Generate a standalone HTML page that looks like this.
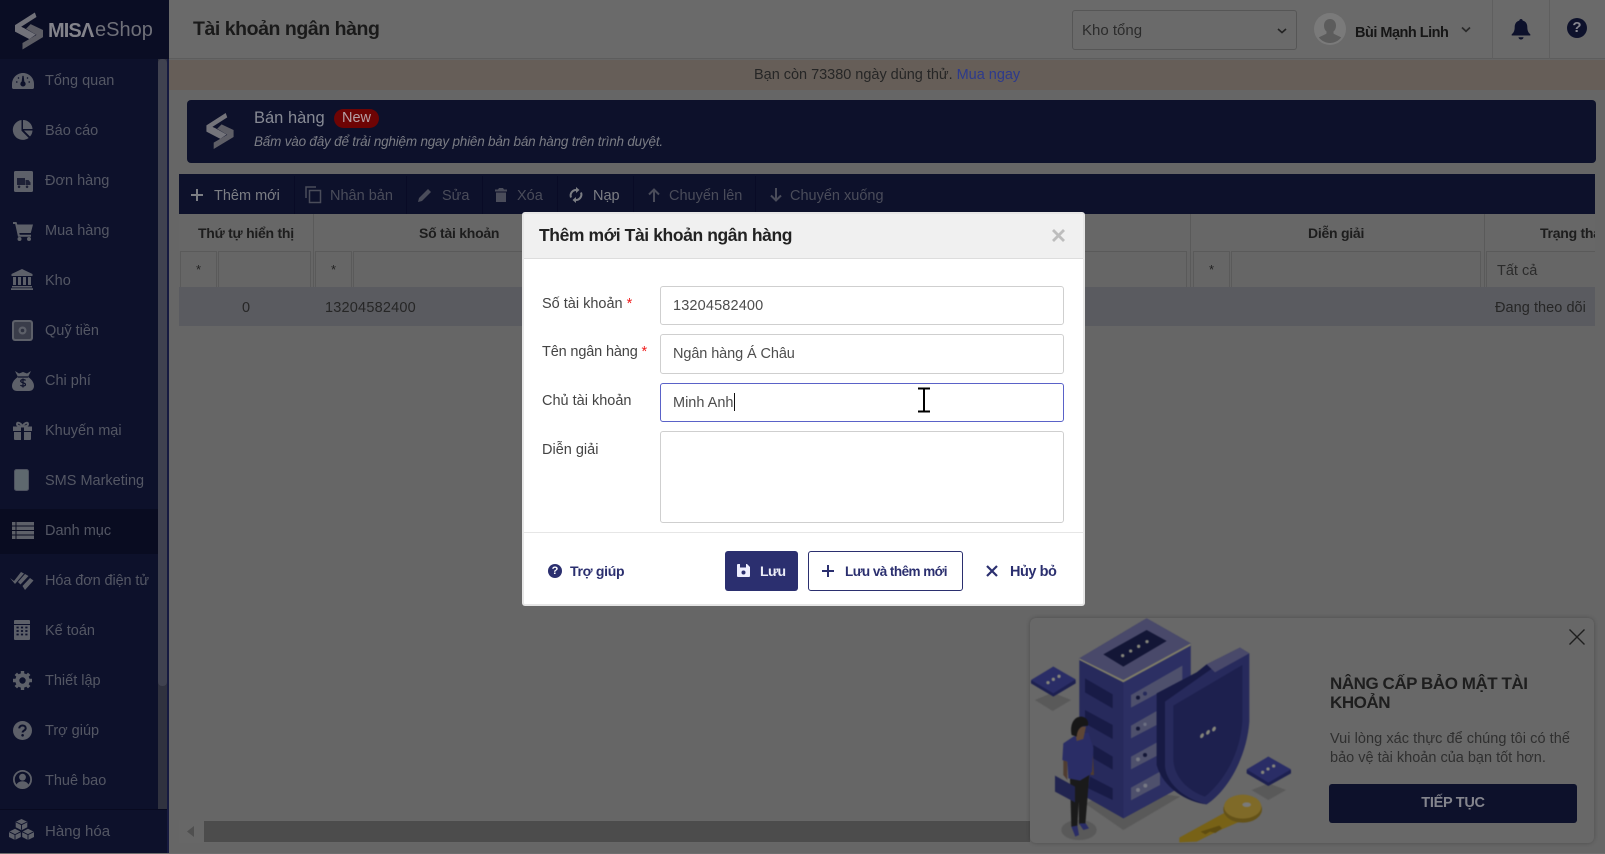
<!DOCTYPE html>
<html lang="vi"><head><meta charset="utf-8"><title>Tài khoản ngân hàng</title>
<style>
*{box-sizing:border-box}
html,body{margin:0;padding:0;width:1605px;height:854px;overflow:hidden;background:#666;font-family:"Liberation Sans","Noto Sans CJK SC",sans-serif;font-size:14.5px}
.a{position:absolute}
.t{position:absolute;white-space:nowrap;line-height:20px;transform:translateY(1px)}
svg{position:absolute;overflow:visible}
.m{color:#545764;font-size:14.5px;left:45px}
.i{fill:#5d6069}
.tb{color:#4a4c5a;font-size:14.5px}
.d{position:absolute;top:176px;height:38px;width:1px;background:#090b26}
.th{color:#1d1d1d;font-weight:bold;font-size:14px;letter-spacing:-.25px}
.f{position:absolute;top:251px;height:36px;border:1px solid #5a5a5a;border-bottom:0;color:#222;text-align:center;line-height:36px;font-size:13px}
.inp{position:absolute;left:660px;width:404px;background:#fff;border:1px solid #cfcfcf;border-radius:3px;color:#4d4d4d;font-size:14.5px;padding-left:12px;padding-top:1px;line-height:37px}
.lb{left:542px;color:#444;font-size:14.5px}
.btn{color:#2b2f6f;font-weight:bold;font-size:14px}
</style></head><body>

<!-- main -->
<div class="a" style="left:169px;top:0;width:1436px;height:59px;background:#6a6a6a;border-bottom:1px solid #5d5d5d"></div>
<div class="a" style="left:169px;top:60px;width:1436px;height:30px;background:#665e58"></div>
<div class="t" style="left:754px;top:64px;color:#262626;font-size:14.5px;letter-spacing:-.02px">Bạn còn 73380 ngày dùng thử. <span style="color:#2d3a8c">Mua ngay</span></div>
<div class="t" style="left:193px;top:17px;color:#1a1a1a;font-size:19.5px;font-weight:bold;line-height:22px;letter-spacing:-.45px">Tài khoản ngân hàng</div>

<!-- header right -->
<div class="a" style="left:1072px;top:10px;width:225px;height:40px;border:1px solid #565656;border-radius:3px"></div>
<div class="t" style="left:1082px;top:20px;color:#2b2b2b;font-size:15px">Kho tổng</div>
<svg style="left:1276px;top:27px" width="12" height="8" viewBox="0 0 12 8"><path d="M2 2l4 3.6L10 2" fill="none" stroke="#222" stroke-width="1.6"/></svg>
<svg style="left:1314px;top:13px" width="32" height="32" viewBox="0 0 32 32"><circle cx="16" cy="16" r="16" fill="#7a7a7a"/><path d="M16 6c3.600 0 6 2.800 6 6.600 0 2.600-1 4.600-2.600 6l.2 2.200 7.600 3.600c-2.800 3.600-6.800 5.600-11.200 5.600S7.600 28 4.800 24.400l7.600-3.600.2-2.200C11 17.200 10 15.200 10 12.600 10 8.800 12.400 6 16 6z" fill="#5c5c5c"/></svg>
<div class="t" style="left:1355px;top:22px;color:#161616;font-size:14.5px;font-weight:bold;letter-spacing:-.5px">Bùi Mạnh Linh</div>
<svg style="left:1460px;top:26px" width="12" height="8" viewBox="0 0 12 8"><path d="M2 1.500l4 3.800 4-3.800" fill="none" stroke="#2a2a2a" stroke-width="1.700"/></svg>
<div class="a" style="left:1492px;top:0;width:1px;height:59px;background:#5f5f5f"></div>
<div class="a" style="left:1549px;top:0;width:1px;height:59px;background:#5f5f5f"></div>
<svg style="left:1511px;top:18px" width="20" height="22" viewBox="0 0 20 22"><path d="M10 1c1 0 1.700.7 1.700 1.600 3 .7 4.600 3.300 4.600 6.400 0 3.600 1 5.600 3 7.300v1.200H.7v-1.200c2-1.700 3-3.700 3-7.300 0-3.100 1.600-5.700 4.600-6.400C8.300 1.700 9 1 10 1zM7.500 19.200h5c0 1.300-1.100 2.300-2.500 2.300s-2.500-1-2.500-2.300z" fill="#0d112b"/></svg>
<div class="a" style="left:1567px;top:18px;width:20px;height:20px;border-radius:50%;background:#0d112b;color:#87878f;font-weight:bold;font-size:15px;line-height:20px;text-align:center">?</div>

<!-- banner -->
<div class="a" style="left:187px;top:100px;width:1409px;height:63px;background:#0d112b;border-radius:4px"></div>
<svg style="left:206px;top:113px" width="28" height="36" viewBox="44 36 86 114"><path d="M105 36L44 75V95L88 118 108 104 72 84 63 80 110 50Z" fill="#74747b"/><path d="M92 72L130 90V112L67 150V130L110 105 78 86Z" fill="#5e5e66"/></svg>
<div class="t" style="left:254px;top:107px;color:#878a94;font-size:16.5px">Bán hàng</div>
<div class="a" style="left:334px;top:109px;width:45px;height:19px;background:#6e0404;border-radius:10px;color:#b5a0a5;text-align:center;line-height:19px;font-size:14.5px">New</div>
<div class="t" style="left:254px;top:131px;color:#7a7c84;font-size:13.5px;font-style:italic;letter-spacing:-.2px">Bấm vào đây để trải nghiệm ngay phiên bản bán hàng trên trình duyệt.</div>

<!-- toolbar -->
<div class="a" style="left:179px;top:174px;width:1416px;height:40px;background:#0d112b"></div>
<div class="d" style="left:294px"></div><div class="d" style="left:406px"></div><div class="d" style="left:482px"></div><div class="d" style="left:557px"></div><div class="d" style="left:633px"></div><div class="d" style="left:755px"></div>
<svg style="left:191px;top:189px" width="12" height="12" viewBox="0 0 12 12"><path d="M6 0v12M0 6h12" stroke="#7c7e84" stroke-width="2"/></svg>
<div class="t" style="left:214px;top:185px;color:#7c7e84;font-size:14.5px">Thêm mới</div>
<svg style="left:305px;top:186px" width="17" height="17" viewBox="0 0 17 17"><path d="M1 12V1h10" fill="none" stroke="#4a4c5a" stroke-width="1.500"/><rect x="4.500" y="4.500" width="11" height="12" fill="none" stroke="#4a4c5a" stroke-width="1.500"/></svg>
<div class="t tb" style="left:330px;top:185px">Nhân bản</div>
<svg style="left:418px;top:188px" width="14" height="14" viewBox="0 0 14 14"><path d="M0 14l1-4L10 1l3 3-9 9z" fill="#4a4c5a"/></svg>
<div class="t tb" style="left:442px;top:185px">Sửa</div>
<svg style="left:495px;top:188px" width="12" height="14" viewBox="0 0 12 14"><path d="M4 0h4l1 1.500h3v2H0v-2h3zM1 4.500h10V14H1z" fill="#4a4c5a"/></svg>
<div class="t tb" style="left:517px;top:185px">Xóa</div>
<svg style="left:569px;top:187px" width="14" height="16" viewBox="0 0 14 16"><path d="M2 10.500A5.500 5.500 0 0 1 7.500 3M12 5.500A5.500 5.500 0 0 1 6.500 13" fill="none" stroke="#7c7e84" stroke-width="2"/><path d="M7 0l3.500 3L7 6zM7 10l-3.500 3L7 16z" fill="#7c7e84"/></svg>
<div class="t" style="left:593px;top:185px;color:#7c7e84;font-size:14.5px">Nạp</div>
<svg style="left:648px;top:188px" width="12" height="14" viewBox="0 0 12 14"><path d="M6 14V2M1 6.500L6 1.500l5 5" fill="none" stroke="#4a4c5a" stroke-width="2"/></svg>
<div class="t tb" style="left:669px;top:185px">Chuyển lên</div>
<svg style="left:770px;top:188px" width="12" height="14" viewBox="0 0 12 14"><path d="M6 0v12M1 7.500l5 5 5-5" fill="none" stroke="#4a4c5a" stroke-width="2"/></svg>
<div class="t tb" style="left:790px;top:185px">Chuyển xuống</div>

<!-- table -->
<div class="a" style="left:179px;top:214px;width:1416px;height:37px;background:#676767"></div>
<div class="a" style="left:313px;top:214px;width:1px;height:73px;background:#5a5a5a"></div>
<div class="a" style="left:1190px;top:214px;width:1px;height:73px;background:#5a5a5a"></div>
<div class="a" style="left:1484px;top:214px;width:1px;height:73px;background:#5a5a5a"></div>
<div class="t th" style="left:198px;top:222px">Thứ tự hiển thị</div>
<div class="t th" style="left:419px;top:222px">Số tài khoản</div>
<div class="t th" style="left:989px;top:222px">Chủ tài khoản</div>
<div class="t th" style="left:1308px;top:222px">Diễn giải</div>
<div class="a" style="left:1500px;top:214px;width:95px;height:37px;overflow:hidden"><div class="t th" style="left:40px;top:8px">Trạng thái</div></div>
<div class="f" style="left:180px;width:37px">*</div><div class="f" style="left:218px;width:93px"></div>
<div class="f" style="left:315px;width:37px">*</div><div class="f" style="left:353px;width:720px"></div>
<div class="f" style="left:1075px;width:112px"></div>
<div class="f" style="left:1193px;width:37px">*</div><div class="f" style="left:1231px;width:250px"></div>
<div class="f" style="left:1486px;width:109px;border-right:0;text-align:left;padding-left:10px;font-size:14.5px;color:#2b2b2b;line-height:38px">Tất cả</div>
<div class="a" style="left:179px;top:287px;width:1416px;height:39px;background:#5a5b60"></div>
<div class="t" style="left:242px;top:297px;color:#262626;font-size:14.5px">0</div>
<div class="t" style="left:325px;top:297px;color:#262626;font-size:14.5px;letter-spacing:.2px">13204582400</div>
<div class="t" style="left:1495px;top:297px;color:#262626;font-size:14.5px;letter-spacing:.05px">Đang theo dõi</div>
<div class="a" style="left:179px;top:820px;width:1416px;height:23px;background:#676767"></div>
<div class="a" style="left:204px;top:821px;width:826px;height:21px;background:#4c4c4c"></div>
<svg style="left:187px;top:826px" width="8" height="11" viewBox="0 0 8 11"><path d="M7 0v11L0 5.500z" fill="#4f4f4f"/></svg>
<div class="a" style="left:0;top:853px;width:1605px;height:1px;background:#6e6e6e"></div>

<!-- sidebar -->
<div class="a" style="left:0;top:0;width:169px;height:853px;background:#0d112b"></div>
<div class="a" style="left:0;top:0;width:169px;height:59px;background:#0a0d24"></div>
<div class="a" style="left:158px;top:59px;width:9px;height:751px;background:#30323f"></div>
<div class="a" style="left:158px;top:59px;width:9px;height:627px;background:#404250;border-radius:4px"></div>
<div class="a" style="left:0;top:509px;width:158px;height:45px;background:#090c21"></div>
<div class="a" style="left:0;top:809px;width:169px;height:1px;background:#080a20"></div>
<div class="a" style="left:167px;top:59px;width:2px;height:794px;background:#161a40"></div>

<!-- logo -->
<svg style="left:15px;top:12px" width="28" height="38" viewBox="44 36 86 114"><path d="M105 36L44 75V95L88 118 108 104 72 84 63 80 110 50Z" fill="#72727a"/><path d="M92 72L130 90V112L67 150V130L110 105 78 86Z" fill="#5c5c64"/></svg>
<div class="t" style="left:48px;top:18px;color:#83838b;font-size:20px;line-height:24px;font-weight:bold;letter-spacing:-.9px">MISΛ</div>
<div class="t" style="left:95px;top:17px;color:#6f7079;font-size:20px;line-height:24px">eShop</div>

<!-- menu -->
<div class="t m" style="top:70px">Tổng quan</div>
<div class="t m" style="top:120px">Báo cáo</div>
<div class="t m" style="top:170px">Đơn hàng</div>
<div class="t m" style="top:220px">Mua hàng</div>
<div class="t m" style="top:270px">Kho</div>
<div class="t m" style="top:320px">Quỹ tiền</div>
<div class="t m" style="top:370px">Chi phí</div>
<div class="t m" style="top:420px">Khuyến mại</div>
<div class="t m" style="top:470px">SMS Marketing</div>
<div class="t m" style="top:520px">Danh mục</div>
<div class="t m" style="top:570px;letter-spacing:-.1px">Hóa đơn điện tử</div>
<div class="t m" style="top:620px">Kế toán</div>
<div class="t m" style="top:670px">Thiết lập</div>
<div class="t m" style="top:720px">Trợ giúp</div>
<div class="t m" style="top:770px">Thuê bao</div>
<div class="t m" style="top:821px;font-size:15px">Hàng hóa</div>

<!-- menu icons -->
<svg style="left:12px;top:73px" width="22" height="16" viewBox="0 0 22 16"><path class="i" d="M11 0C4.900 0 0 4.900 0 11v3.500c0 .8.600 1.500 1.500 1.500h19c.9 0 1.500-.7 1.500-1.500V11C22 4.900 17.100 0 11 0z"/><path d="M10.300 9l.7-6 .7 6a2 2 0 1 1-1.400 0zM4 9h1.500M16.500 9H18M6 4.500l1 1M16 4.500l-1 1" stroke="#0d112b" stroke-width="1.300" fill="#0d112b"/></svg>
<svg style="left:12px;top:120px" width="21" height="20" viewBox="0 0 21 20"><path class="i" d="M9.500 0v10.800l7.200 7.200a10 10 0 1 1-7.200-18z"/><path class="i" d="M11 0a9.500 9.500 0 0 1 9.500 9H11zM12 10.500h8.500a9 9 0 0 1-2.500 6z"/></svg>
<svg style="left:14px;top:171px" width="19" height="21" viewBox="0 0 19 21"><rect width="19" height="21" rx="1.500" fill="#5d6069"/><path d="M3 7h8v7H3zM11.500 9h3l2 2.500V14h-5zM5 14.500a1.300 1.300 0 1 0 .1 0M13 14.500a1.300 1.300 0 1 0 .1 0" fill="#1d2036"/></svg>
<svg style="left:13px;top:222px" width="20" height="19" viewBox="0 0 20 19"><path class="i" d="M0 0h3.500l.8 2.500H20l-2.200 8.500H6.300l.4 1.800h11.300v2H5L2.200 2H0z"/><circle class="i" cx="6.500" cy="17" r="2"/><circle class="i" cx="16" cy="17" r="2"/></svg>
<svg style="left:11px;top:269px" width="22" height="21" viewBox="0 0 22 21"><path class="i" d="M11 0l10.500 5v2h-21V5zM2 8h3v8H2zM7 8h3v8H7zM12 8h3v8h-3zM17 8h3v8h-3zM1 17h20v1.500H1zM0 19.300h22V21H0z"/></svg>
<svg style="left:12px;top:320px" width="21" height="21" viewBox="0 0 21 21"><rect width="21" height="21" rx="3" fill="#5d6069"/><rect x="2" y="2" width="17" height="17" rx="1.500" fill="#3a3d4a"/><circle cx="10.500" cy="10.500" r="4" fill="#5d6069"/><circle cx="10.500" cy="10.500" r="1.800" fill="#2e3140"/></svg>
<svg style="left:12px;top:371px" width="22" height="20" viewBox="0 0 22 20"><path class="i" d="M3 0l4 2.500L11 1l4 1.500L19 0l-3 6c3.500 2 6 5.500 6 9 0 3-2 5-5 5H5c-3 0-5-2-5-5 0-3.500 2.500-7 6-9z"/><path d="M13.500 9.500c-.5-1-4.600-1.500-4.800.5-.2 2 4.800 1.500 4.800 3.500 0 2-4.300 1.800-5 .6M11 7.500v9M6 6h10" fill="none" stroke="#0d112b" stroke-width="1.200"/></svg>
<svg style="left:13px;top:422px" width="19" height="18" viewBox="0 0 19 18"><path class="i" d="M0 4.500h8V9H0zM11 4.500h8V9h-8zM1 10h7v8H2a1 1 0 0 1-1-1zM11 10h7v7a1 1 0 0 1-1 1h-6z"/><path d="M9.500 4.500C8 1 4 -.5 4 2c0 2 3 2.500 5.500 2.500zM9.500 4.500c1.500-3.500 5.500-5 5.500-2.500 0 2-3 2.500-5.500 2.500z" fill="none" stroke="#5d6069" stroke-width="2"/></svg>
<svg style="left:14px;top:469px" width="15" height="22" viewBox="0 0 15 22"><rect x=".5" y=".5" width="14" height="21" rx="2" fill="#5e686e" stroke="#4e5260"/></svg>
<svg style="left:12px;top:522px" width="22" height="17" viewBox="0 0 22 17"><path class="i" d="M0 0h3.500v3.500H0zM4.500 0H22v3.500H4.500zM0 4.500h3.500V8H0zM4.500 4.500H22V8H4.500zM0 9h3.500v3.500H0zM4.500 9H22v3.500H4.500zM0 13.500h3.500V17H0zM4.500 13.500H22V17H4.500z"/></svg>
<svg style="left:10px;top:572px" width="24" height="18" viewBox="0 0 24 18"><path class="i" d="M0 6l4 3L11 0l3 1.500L5 12zM8 10L15 2l3.500 2-8 8.500zM12.500 14L20 6l3.500 2.500L15 18z"/></svg>
<svg style="left:14px;top:620px" width="16" height="20" viewBox="0 0 16 20"><path class="i" d="M1 0h14a1 1 0 0 1 1 1v3H0V1a1 1 0 0 1 1-1zM0 5h16v14a1 1 0 0 1-1 1H1a1 1 0 0 1-1-1z"/><path d="M2.500 7.500h2.200M6.900 7.500h2.200M11.300 7.500h2.200M2.500 11h2.200M6.900 11h2.200M11.300 11h2.200M2.500 14.500h2.200M6.900 14.500h2.200M11.300 14.500h2.200" stroke="#0d112b" stroke-width="1.700"/></svg>
<svg style="left:13px;top:671px" width="19" height="19" viewBox="0 0 19 19"><circle cx="9.500" cy="9.500" r="5.200" fill="none" stroke="#5d6069" stroke-width="4"/><path d="M9.500 0v19M0 9.500h19M2.800 2.800l13.400 13.400M16.200 2.800L2.800 16.200" stroke="#5d6069" stroke-width="3.400" stroke-dasharray="3.400 12.300 3.800"/></svg>
<svg style="left:13px;top:721px" width="19" height="19" viewBox="0 0 19 19"><circle class="i" cx="9.500" cy="9.500" r="9.500"/><path d="M6.300 7.400c0-1.800 1.400-2.900 3.200-2.900s3.200 1 3.200 2.700c0 2.300-3.100 2.400-3.100 4.300" fill="none" stroke="#0d112b" stroke-width="2"/><circle cx="9.600" cy="14.300" r="1.300" fill="#0d112b"/></svg>
<svg style="left:13px;top:770px" width="19" height="19" viewBox="0 0 19 19"><circle cx="9.500" cy="9.500" r="8.600" fill="none" stroke="#5d6069" stroke-width="1.800"/><circle class="i" cx="9.500" cy="7.200" r="3.400"/><path class="i" d="M3.300 15.300c.8-2.600 3.200-4 6.200-4s5.400 1.400 6.200 4c-1.600 1.600-3.800 2.500-6.200 2.500s-4.600-.9-6.200-2.500z"/></svg>
<svg style="left:9px;top:819px" width="25" height="21" viewBox="0 0 25 21"><path class="i" d="M12.500 0l5.800 2.800v5.500l-5.800 2.900-5.800-2.900V2.800zM6 9.800l5.800 2.900V18L6 21 0 18v-5.300zM19 9.800l6 2.900V18l-6 3-5.800-3v-5.300z"/><path d="M7 3l5.500 2.700L18 3M12.500 5.700v5M.3 12.800l5.700 2.800 5.700-2.800M6 15.600V21M13.300 12.800l5.700 2.800 5.700-2.800M19 15.600V21" fill="none" stroke="#0d112b" stroke-width=".9"/></svg>

<!-- popup -->
<div class="a" style="left:1030px;top:618px;width:564px;height:225px;background:#686868;border-radius:6px;box-shadow:0 0 4px rgba(0,0,0,.25)"></div>
<svg style="left:1030px;top:615px;filter:blur(.5px)" width="270" height="230" viewBox="0 0 810 690">
<path d="M15 255L68 233 123 255 68 288zM665 525L715 505 768 525 715 555zM165 565L280 520 450 545 280 645z" fill="#595959"/>
<ellipse cx="147" cy="645" rx="53" ry="30" fill="#595959"/>
<path d="M148 130L350 10 482 85 482 500 280 610 165 545 148 535z" fill="#272a5c"/>
<path d="M280 200L482 85V500L280 610z" fill="#2c2f63"/>
<path d="M148 130L350 10 482 85 280 200z" fill="#49496a"/>
<path d="M148 130L280 195 482 85 482 92 280 202 148 135z" fill="#7d7b68"/>
<path d="M220 118L350 45 410 78 280 155z" fill="#131636"/>
<g fill="#85857a"><circle cx="278" cy="122" r="5"/><circle cx="302" cy="108" r="5"/><circle cx="326" cy="94" r="5"/><circle cx="351" cy="80" r="5"/></g>
<g fill="#181b46"><path d="M165 190L248 238V280L165 232zM165 285L248 330V372L165 325zM190 390L248 425V464L190 430zM180 485L248 520V555L175 520z"/></g>
<g fill="#4e506c"><path d="M303 240L457 152V195L303 278zM303 332L380 288V330L303 370zM303 425L385 380V420L303 463zM303 518L390 470V510L303 556z"/></g>
<g><circle cx="324" cy="248" r="6" fill="#131636"/><circle cx="345" cy="236" r="6" fill="#262a5a"/><circle cx="324" cy="341" r="6" fill="#131636"/><circle cx="345" cy="328" r="5" fill="#6c6f82"/><circle cx="324" cy="433" r="6" fill="#767884"/><circle cx="345" cy="420" r="6" fill="#131636"/><circle cx="324" cy="525" r="6" fill="#767884"/><circle cx="346" cy="512" r="6" fill="#767884"/></g>
<path d="M380 235L500 172 530 148 630 98 658 115V320C650 430 590 530 530 568 470 560 400 520 380 450z" fill="#272a5c"/>
<path d="M380 235L500 172 530 148 550 158 405 260 405 455C410 510 470 555 530 568 470 560 400 520 380 450z" fill="#171a44"/>
<path d="M530 148L630 98 658 115 555 172z" fill="#49496a"/>
<path d="M430 272L637 150V320C630 420 580 500 525 545 480 530 430 490 430 430z" fill="#1d204e"/>
<g fill="#85857a"><ellipse cx="516" cy="362" rx="5" ry="8" transform="rotate(30 516 362)"/><ellipse cx="534" cy="352" rx="5" ry="8" transform="rotate(30 534 352)"/><ellipse cx="552" cy="342" rx="5" ry="8" transform="rotate(30 552 342)"/></g>
<path d="M3 197L70 155 137 195V205L70 245 3 205z" fill="#1d2050"/><path d="M3 195L70 155 137 193 70 235z" fill="#2a2d66"/>
<g fill="#85857a"><circle cx="54" cy="203" r="5"/><circle cx="70" cy="193" r="5"/><circle cx="87" cy="184" r="5"/></g>
<path d="M650 465L715 425 783 465V475L715 513 650 475z" fill="#1d2050"/><path d="M650 463L715 425 783 463 715 503z" fill="#2a2d66"/>
<g fill="#85857a"><circle cx="698" cy="472" r="5"/><circle cx="714" cy="462" r="5"/><circle cx="731" cy="453" r="5"/></g>
<path d="M590 590L640 615 560 650 500 680 448 682V668z" fill="#786216"/>
<path d="M512 650l14 8 14-8 16 4 20-14-8-8z" fill="#5e4c10"/>
<ellipse cx="638" cy="583" rx="58" ry="40" fill="#645218"/>
<ellipse cx="638" cy="575" rx="56" ry="36" fill="#7f6a28"/>
<ellipse cx="650" cy="569" rx="13" ry="7" fill="#7a7a7a"/>
<path d="M120 490L178 480 166 628H147L146 560 142 635H124z" fill="#1a1a1a"/>
<path d="M124 635L142 632 147 660 136 665z M147 625L167 625 177 640 160 645z" fill="#2a2d66"/>
<path d="M75 482L135 515V562L75 530z" fill="#212450"/>
<path d="M100 435L112 440 112 495 100 480zM176 410L188 405 192 480 182 480z" fill="#4f3c30"/>
<path d="M130 365L175 352 190 400 186 470 178 480 150 497 115 490 112 440 97 435 100 385z" fill="#2a2d66"/>
<path d="M133 335L168 335 160 372 140 378z" fill="#5e4636"/>
<path d="M125 360C118 325 135 303 155 305 170 307 178 320 173 333 155 330 142 340 140 365z" fill="#171717"/>
</svg>
<svg style="left:1569px;top:629px" width="16" height="16" viewBox="0 0 16 16"><path d="M.5.500l15 15M15.500.500l-15 15" stroke="#1e1e1e" stroke-width="1.400"/></svg>
<div class="t" style="left:1330px;top:673px;color:#1e1e1e;font-size:17px;font-weight:bold;letter-spacing:-.45px">NÂNG CẤP BẢO MẬT TÀI</div>
<div class="t" style="left:1330px;top:692px;color:#1e1e1e;font-size:17px;font-weight:bold;letter-spacing:-.45px">KHOẢN</div>
<div class="t" style="left:1330px;top:728px;color:#2f2f2f;font-size:14.5px;letter-spacing:.05px">Vui lòng xác thực để chúng tôi có thể</div>
<div class="t" style="left:1330px;top:747px;color:#2f2f2f;font-size:14.5px">bảo vệ tài khoản của bạn tốt hơn.</div>
<div class="a" style="left:1329px;top:784px;width:248px;height:39px;background:#0d112b;border-radius:3px;color:#84858d;text-align:center;line-height:38px;font-weight:bold;font-size:14.5px;letter-spacing:-.3px">TIẾP TỤC</div>

<!-- dialog -->
<div class="a" style="left:522px;top:212px;width:563px;height:394px;background:#fff;border:2px solid #e6e6e6;border-radius:3px"></div>
<div class="a" style="left:524px;top:214px;width:559px;height:45px;background:#f0f0f0;border-bottom:1px solid #ddd"></div>
<div class="t" style="left:539px;top:224px;color:#222;font-size:17.5px;font-weight:bold;letter-spacing:-.4px">Thêm mới Tài khoản ngân hàng</div>
<svg style="left:1052px;top:229px" width="13" height="13" viewBox="0 0 13 13"><path d="M1 1l11 11M12 1L1 12" stroke="#bdbdbd" stroke-width="2.800"/></svg>

<div class="t lb" style="top:293px">Số tài khoản <span style="color:#f01c1c">*</span></div>
<div class="t lb" style="top:341px;letter-spacing:-.15px">Tên ngân hàng <span style="color:#f01c1c">*</span></div>
<div class="t lb" style="top:390px">Chủ tài khoản</div>
<div class="t lb" style="top:439px">Diễn giải</div>
<div class="inp" style="top:286px;height:39px;letter-spacing:.15px">13204582400</div>
<div class="inp" style="top:334px;height:40px;letter-spacing:-.1px">Ngân hàng Á Châu</div>
<div class="inp" style="top:383px;height:39px;border-color:#5a62c8">Minh Anh</div>
<div class="a" style="left:734px;top:393px;width:1px;height:18px;background:#111"></div>
<div class="a" style="left:660px;top:431px;width:404px;height:92px;background:#fff;border:1px solid #cfcfcf;border-radius:3px"></div>
<svg style="left:917px;top:387px" width="14" height="26" viewBox="0 0 14 26"><path d="M1 1.500h12M1 24.500h12M7 1.500v23" stroke="#000" stroke-width="2"/></svg>
<div class="a" style="left:524px;top:532px;width:559px;height:1px;background:#e6e6e6"></div>

<div class="a" style="left:548px;top:564px;width:14px;height:14px;border-radius:50%;background:#2b2f6f;color:#fff;font-size:11px;font-weight:bold;line-height:14px;text-align:center">?</div>
<div class="t btn" style="left:570px;top:560px;letter-spacing:-.3px">Trợ giúp</div>
<div class="a" style="left:725px;top:551px;width:73px;height:40px;background:#2b2f6f;border-radius:3px"></div>
<svg style="left:737px;top:564px" width="13" height="13" viewBox="0 0 13 13"><path d="M1 0h9l3 3v9a1 1 0 0 1-1 1H1a1 1 0 0 1-1-1V1a1 1 0 0 1 1-1z" fill="#eef"/><path d="M3 0h6v3.500H3z" fill="#2b2f6f"/><circle cx="6.500" cy="8.500" r="2" fill="#2b2f6f"/></svg>
<div class="t" style="left:760px;top:560px;color:#eceef8;font-weight:bold;font-size:14px;letter-spacing:-.6px">Lưu</div>
<div class="a" style="left:808px;top:551px;width:155px;height:40px;background:#fff;border:1px solid #2b2f6f;border-radius:3px"></div>
<svg style="left:822px;top:565px" width="12" height="12" viewBox="0 0 12 12"><path d="M6 0v12M0 6h12" stroke="#2b2f6f" stroke-width="2"/></svg>
<div class="t btn" style="left:845px;top:561px;font-size:13.5px;letter-spacing:-.55px">Lưu và thêm mới</div>
<svg style="left:986px;top:565px" width="12" height="12" viewBox="0 0 12 12"><path d="M1 1l10 10M11 1L1 11" stroke="#2b2f6f" stroke-width="2.200"/></svg>
<div class="t btn" style="left:1010px;top:561px;font-size:14.5px;letter-spacing:-.45px">Hủy bỏ</div>

</body></html>
